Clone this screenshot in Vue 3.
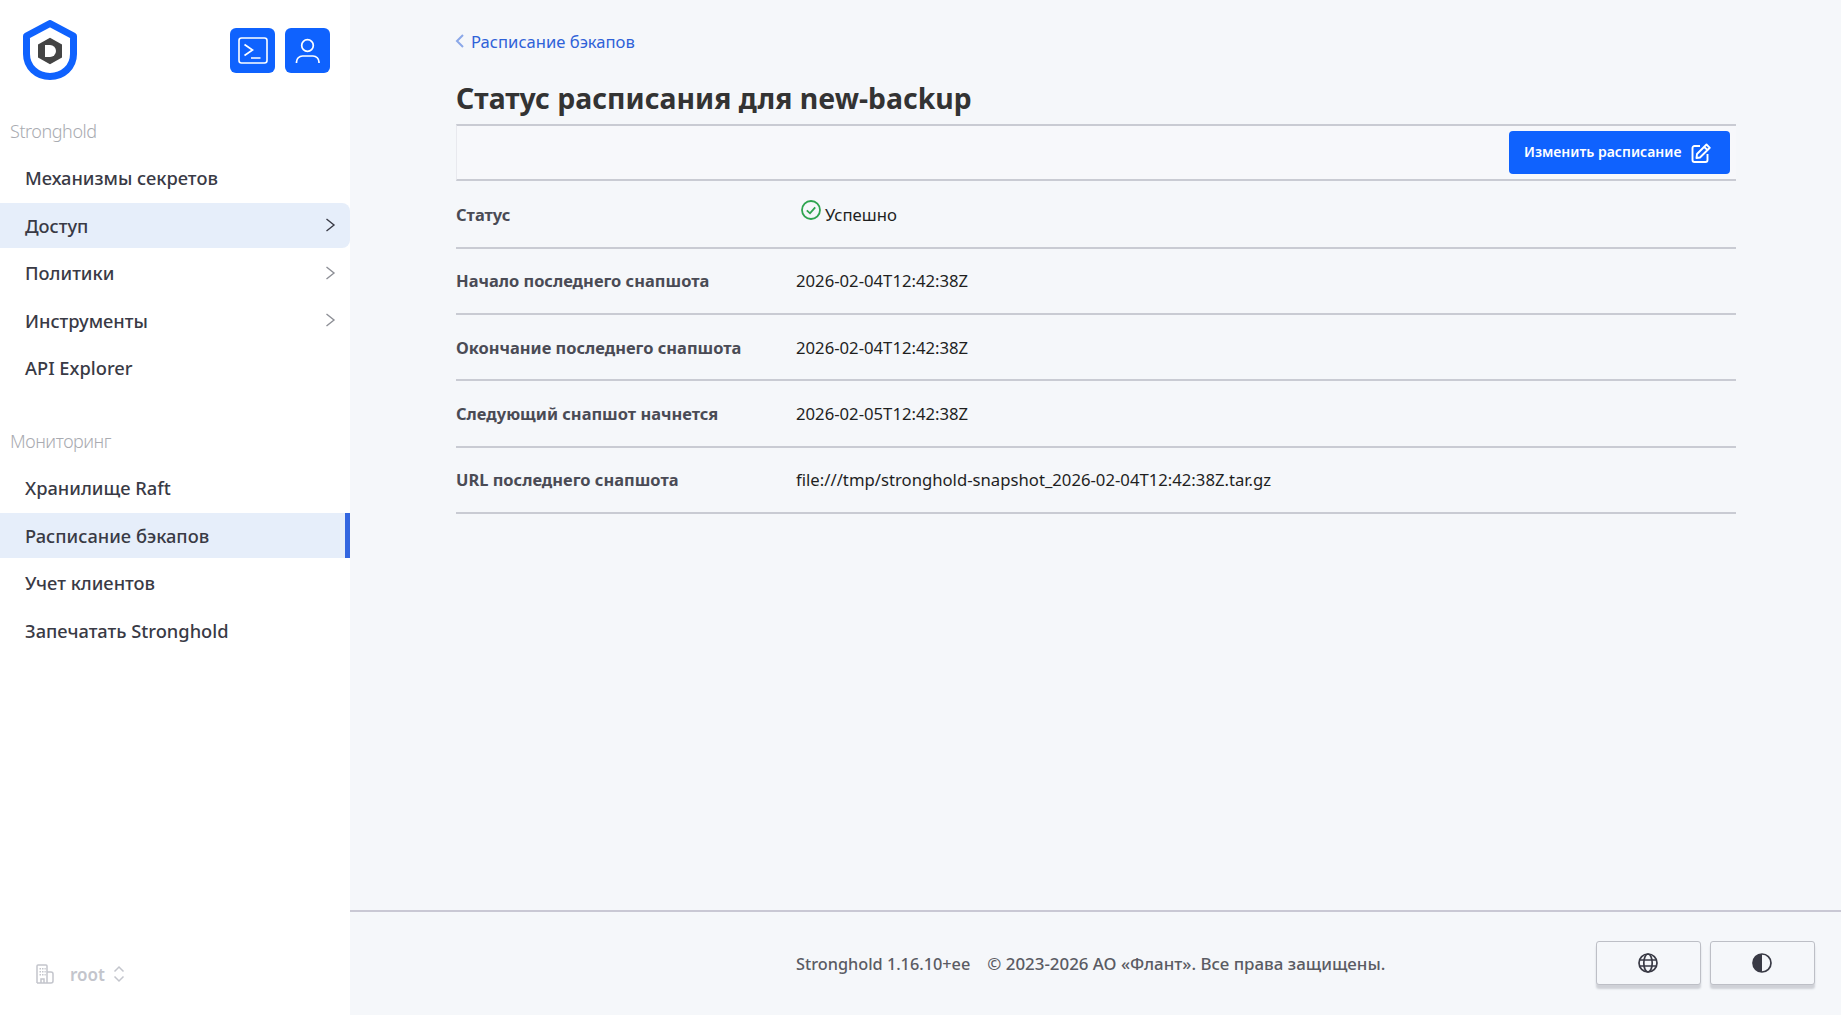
<script setup>
const groups = [
  { title: 'Stronghold', items: [
    { label: 'Механизмы секретов' },
    { label: 'Доступ', chevron: true, open: true },
    { label: 'Политики', chevron: true },
    { label: 'Инструменты', chevron: true },
    { label: 'API Explorer' },
  ]},
  { title: 'Мониторинг', items: [
    { label: 'Хранилище Raft' },
    { label: 'Расписание бэкапов', active: true },
    { label: 'Учет клиентов' },
    { label: 'Запечатать Stronghold' },
  ]},
]
const rows = [
  ['Начало последнего снапшота', '2026-02-04T12:42:38Z'],
  ['Окончание последнего снапшота', '2026-02-04T12:42:38Z'],
  ['Следующий снапшот начнется', '2026-02-05T12:42:38Z'],
  ['URL последнего снапшота', 'file:///tmp/stronghold-snapshot_2026-02-04T12:42:38Z.tar.gz'],
]
</script>

<template>
  <div class="app">
    <aside class="side">
      <div class="brand">
        <svg class="logo" viewBox="0 0 54 60" width="54" height="60">
          <path d="M27 3.500 L50.500 16 V34 C50.500 47 40 56.500 27 56.500 C14 56.500 3.500 47 3.500 34 V16 Z" fill="#fff" stroke="#0f62fe" stroke-width="7" stroke-linejoin="round"/>
          <path d="M27 17.700 L39 24.500 V37.500 L27 44.300 L15 37.500 V24.500 Z" fill="#444"/>
          <path d="M22 25 H27 A6 6 0 0 1 27 37 H22 Z" fill="#fff"/>
        </svg>
        <div class="brand-btns">
          <button class="icon-btn" type="button">
            <svg viewBox="0 0 32 32" width="32" height="32" fill="none" stroke="#fff" stroke-width="1.600">
              <rect x="2" y="3" width="28" height="25" rx="2.500"/>
              <path d="M7.500 9.500 L15.500 15 L7.500 20.500 M14 23 H23.500" stroke-width="1.700"/>
            </svg>
          </button>
          <button class="icon-btn" type="button">
            <svg viewBox="0 0 32 32" width="32" height="32" fill="none" stroke="#fff" stroke-width="1.700">
              <circle cx="15.500" cy="10.500" r="5.800"/>
              <path d="M4.500 28 V27 A6 6 0 0 1 10.500 21 H21 A6 6 0 0 1 27 27 V28"/>
            </svg>
          </button>
        </div>
      </div>

      <nav class="nav">
        <section v-for="g in groups" :key="g.title" class="group">
          <div class="group-title">{{ g.title }}</div>
          <a v-for="it in g.items" :key="it.label" class="item" :class="{ open: it.open, active: it.active }">
            <span>{{ it.label }}</span>
            <svg v-if="it.chevron" class="chev" viewBox="0 0 16 16" width="16" height="16" fill="none" stroke="currentColor" stroke-width="1.400">
              <path d="M4.500 2 L12 8 L4.500 14"/>
            </svg>
          </a>
        </section>
      </nav>

      <div class="tenant">
        <svg viewBox="0 0 20 20" width="20" height="20" fill="none" stroke="#c3c5cc" stroke-width="1.500">
          <path d="M2 19 V2 A1 1 0 0 1 3 1 H11 A1 1 0 0 1 12 2 V19 M12 8 H16 A2 2 0 0 1 18 10 V17 A2 2 0 0 1 16 19 H2 M6 19 V15 H9 V19"/>
          <g fill="#c3c5cc" stroke="none">
            <rect x="4.500" y="4" width="1.500" height="1.500"/><rect x="7" y="4" width="1.500" height="1.500"/><rect x="9.500" y="4" width="1.200" height="1.500"/>
            <rect x="4.500" y="7" width="1.500" height="1.500"/><rect x="7" y="7" width="1.500" height="1.500"/><rect x="9.500" y="7" width="1.200" height="1.500"/>
            <rect x="4.500" y="10" width="1.500" height="1.500"/><rect x="7" y="10" width="1.500" height="1.500"/><rect x="9.500" y="10" width="1.200" height="1.500"/>
          </g>
        </svg>
        <span class="tenant-name">root</span>
        <svg viewBox="0 0 14 20" width="14" height="20" fill="none" stroke="#c3c5cc" stroke-width="1.500">
          <path d="M2.500 7.500 L7 3 L11.500 7.500 M2.500 12.500 L7 17 L11.500 12.500"/>
        </svg>
      </div>
    </aside>

    <div class="main">
      <main class="content">
        <a class="crumb">
          <svg viewBox="0 0 10 16" width="10" height="16" fill="none" stroke="#8ba8e8" stroke-width="2"><path d="M8 2 L2 8 L8 14"/></svg>
          <span>Расписание бэкапов</span>
        </a>
        <h1 class="title">Статус расписания для new-backup</h1>
        <div class="toolbar">
          <button class="edit" type="button">
            <span class="edit-label">Изменить расписание</span>
            <svg viewBox="0 0 20 20" width="20" height="20" fill="none" stroke="#fff" stroke-width="1.900" stroke-linejoin="round">
              <path d="M9 3 H3.500 A2 2 0 0 0 1.500 5 V17 A2 2 0 0 0 3.500 19 H14.500 A2 2 0 0 0 16.500 17 V11"/>
              <path d="M15.500 1.500 L18.800 4.800 L9 14.500 L5.500 15 L6 11 Z M13.200 3.800 L16.500 7.100"/>
            </svg>
          </button>
        </div>
        <div class="row">
          <div class="key">Статус</div>
          <div class="val status">
            <svg viewBox="0 0 20 20" width="20" height="20" fill="none" stroke="#2ea44f" stroke-width="1.800">
              <circle cx="10" cy="10" r="9"/>
              <path d="M5.800 10.300 L9 13.300 L14.200 7.300"/>
            </svg>
            <span>Успешно</span>
          </div>
        </div>
        <div v-for="r in rows" :key="r[0]" class="row">
          <div class="key">{{ r[0] }}</div>
          <div class="val">{{ r[1] }}</div>
        </div>
      </main>

      <footer class="foot">
        <div class="foot-text">
          <span>Stronghold 1.16.10+ee</span>
          <span class="copy">© 2023-2026 АО «Флант». Все права защищены.</span>
        </div>
        <div class="foot-btns">
          <button class="ghost" type="button">
            <svg viewBox="0 0 20 20" width="20" height="20" fill="none" stroke="#393a45" stroke-width="1.700">
              <circle cx="10" cy="10" r="9"/>
              <ellipse cx="10" cy="10" rx="4.200" ry="9"/>
              <path d="M1.500 7 H18.500 M1.500 13 H18.500"/>
            </svg>
          </button>
          <button class="ghost" type="button">
            <svg viewBox="0 0 20 20" width="20" height="20">
              <circle cx="10" cy="10" r="9" fill="none" stroke="#393a45" stroke-width="1.700"/>
              <path d="M10 1 A9 9 0 0 0 10 19 Z" fill="#393a45"/>
            </svg>
          </button>
        </div>
      </footer>
    </div>
  </div>
</template>

<style>
html, body { margin: 0; background: #f5f7fa; }
</style>

<style scoped>
* { box-sizing: border-box; }
.app {
  display: flex;
  width: 1841px;
  height: 1015px;
  overflow: hidden;
  font-family: "Noto Sans", sans-serif;
  color: #1f1f1f;
}
.side {
  width: 350px;
  flex: none;
  background: #fff;
  display: flex;
  flex-direction: column;
}
.brand {
  display: flex;
  justify-content: space-between;
  align-items: flex-start;
  padding: 20px 20px 0 23px;
  height: 119px;
}
.brand-btns { display: flex; gap: 10px; padding-top: 8px; }
.icon-btn {
  width: 45px;
  height: 45px;
  border: 0;
  border-radius: 6px;
  background: #0f62fe;
  display: flex;
  align-items: center;
  justify-content: center;
  padding: 0;
}
.nav { flex: 1; }
.group { margin-bottom: 39.200px; }
.group-title {
  font-size: 18px;
  font-weight: 300;
  color: #a9abb1;
  line-height: 25px;
  padding-left: 10px;
  margin-bottom: 11px;
  letter-spacing: -0.450px;
}
.item {
  display: flex;
  align-items: center;
  justify-content: space-between;
  height: 45px;
  margin-bottom: 2.500px;
  padding: 0 12.500px 0 25px;
  font-size: 18.300px;
  font-weight: 500;
  color: #393a45;
}
.item.open {
  background: #e6eefa;
  border-radius: 0 8px 8px 0;
}
.item.active {
  background: #e6eefa;
  border-right: 5px solid #3366e0;
}
.chev { color: #8d8f96; }
.item.open .chev { color: #393a45; }
.tenant {
  display: flex;
  align-items: center;
  height: 40px;
  margin-bottom: 21px;
  padding-left: 35px;
  gap: 15px;
}
.tenant-name { font-size: 17px; font-weight: 600; color: #c3c5cc; margin-right: -8px; }
.main {
  flex: 1;
  display: flex;
  flex-direction: column;
  background: #f5f7fa;
  min-width: 0;
}
.content {
  flex: 1;
  padding: 28px 105px 0 106px;
}
.crumb {
  display: flex;
  align-items: center;
  gap: 6px;
  height: 26px;
  margin-left: -1px;
  font-size: 16.600px;
  color: #2f62d8;
}
.title {
  margin: 21px 0 2px;
  font-size: 28.400px;
  line-height: 47px;
  font-weight: 700;
  color: #333;
}
.toolbar {
  height: 57px;
  margin-bottom: 1.400px;
  background: #f7f8fb;
  border-top: 2px solid #c9cbd3;
  border-bottom: 2px solid #c9cbd3;
  border-left: 1px solid #e8e9ee;
  display: flex;
  align-items: center;
  justify-content: flex-end;
  padding-right: 6px;
}
.edit {
  display: flex;
  align-items: center;
  justify-content: space-between;
  width: 221px;
  height: 43px;
  padding: 0 19px 0 15px;
  border: 0;
  border-radius: 4px;
  background: #0f62fe;
  color: #fff;
  white-space: nowrap;
  font: 600 14px "Noto Sans", sans-serif;
}
.edit-label { margin-bottom: 2px; }
.edit svg { flex: none; }
.row {
  display: flex;
  align-items: center;
  height: 66.300px;
  border-bottom: 2px solid #c9cbd3;
}
.key {
  width: 340px;
  flex: none;
  font-size: 16.440px;
  font-weight: 700;
  color: #4a4b55;
}
.val { font-size: 16.700px; color: #1f1f1f; }
.status { display: flex; align-items: flex-start; gap: 4px; padding-left: 5px; }
.status svg { margin-top: -3px; }
.foot {
  height: 105px;
  flex: none;
  border-top: 2px solid #c9c8d4;
  display: flex;
  align-items: center;
  padding-right: 26.500px;
  position: relative;
}
.foot-text {
  display: flex;
  align-items: baseline;
  gap: 17px;
  margin-left: 446px;
  font-size: 16.300px;
  font-weight: 500;
  color: #5a5b63;
}
.copy { font-size: 16.900px; }
.foot-btns { display: flex; gap: 9.500px; margin-left: auto; margin-top: -1px; }
.ghost {
  width: 104.500px;
  height: 44px;
  border: 1px solid #bdbfc6;
  border-radius: 3px;
  background: #f5f7fa;
  box-shadow: 0 4px 2px 0 #cfd1d7;
  display: flex;
  align-items: center;
  justify-content: center;
  padding: 0;
}
</style>
